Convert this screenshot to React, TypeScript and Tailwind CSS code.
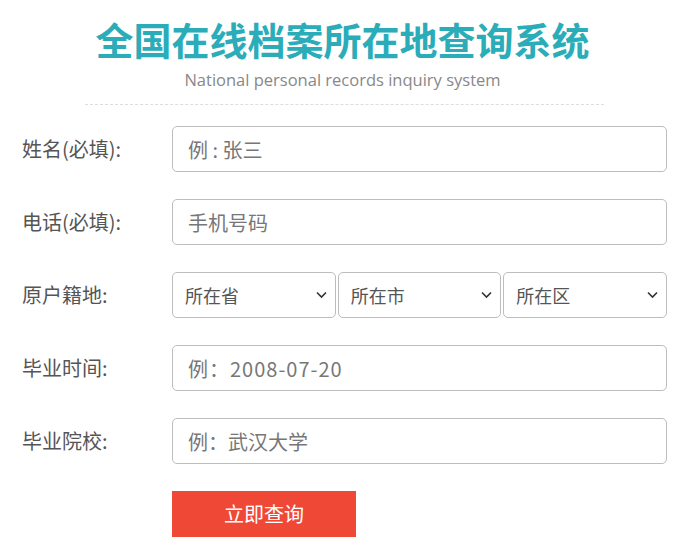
import { useState } from 'react';

const cjk = { fontFamily: '"Microsoft YaHei", "Noto Sans CJK SC", sans-serif' };

const Chevron = () => (
  <svg width="11" height="7" viewBox="0 0 11 7" className="pointer-events-none absolute right-[9px] top-1/2 -translate-y-1/2">
    <path d="M1 1l4.5 4.5L10 1" fill="none" stroke="#333" strokeWidth="1.6" />
  </svg>
);

const Row = ({ label, children }: { label: string; children: React.ReactNode }) => (
  <div className="flex items-center h-[46px]">
    <label className="w-[172px] pl-[22px] text-[20px] text-[#555]">{label}</label>
    <div className="flex-1 flex h-full">{children}</div>
  </div>
);

const TextInput = ({ placeholder, wide }: { placeholder: string; wide?: boolean }) => (
  <input
    placeholder={placeholder}
    className={
      wide
        ? 'w-full h-full border border-[#bdbdbd] rounded-[5px] px-[15px] text-[20px] tracking-[1px] text-[#555] placeholder:text-[#777] outline-none'
        : 'w-full h-full border border-[#bdbdbd] rounded-[5px] px-[15px] text-[20px] text-[#555] placeholder:text-[#777] outline-none'
    }
    style={cjk}
  />
);

const Select = ({ text }: { text: string }) => (
  <div className="relative flex-1 h-full">
    <select
      className="w-full h-full appearance-none border border-[#bdbdbd] rounded-[5px] pl-[12px] text-[18px] text-[#555] bg-white outline-none"
      style={cjk}
    >
      <option>{text}</option>
    </select>
    <Chevron />
  </div>
);

export default function App() {
  const [, setQ] = useState(0);
  return (
    <div className="w-[685px] h-[551px] bg-white overflow-hidden" style={cjk}>
      <div className="pt-[13px] text-center">
        <h1 className="text-[38px] font-bold leading-[52px] text-[#2badb9]">全国在线档案所在地查询系统</h1>
        <p
          className="mt-[3px] text-[16.5px] leading-[24px] text-[#888]"
          style={{ fontFamily: '"Open Sans", sans-serif' }}
        >
          National personal records inquiry system
        </p>
      </div>
      <div className="ml-[85px] w-[519px] mt-[12px] border-t border-dashed border-[#ddd]" />
      <form className="mt-[21px] pr-[18px] flex flex-col gap-[27px]" onSubmit={(e) => e.preventDefault()}>
        <Row label="姓名(必填):">
          <TextInput placeholder="例 : 张三" />
        </Row>
        <Row label="电话(必填):">
          <TextInput placeholder="手机号码" />
        </Row>
        <Row label="原户籍地:">
          <div className="flex w-full h-full gap-[2px]">
            <Select text="所在省" />
            <Select text="所在市" />
            <Select text="所在区" />
          </div>
        </Row>
        <Row label="毕业时间:">
          <TextInput placeholder="例：2008-07-20" wide />
        </Row>
        <Row label="毕业院校:">
          <TextInput placeholder="例：武汉大学" />
        </Row>
        <div className="pl-[172px]">
          <button
            type="submit"
            onClick={() => setQ((n) => n + 1)}
            className="w-[184px] h-[46px] bg-[#f04836] text-white text-[20px]"
          >
            立即查询
          </button>
        </div>
      </form>
    </div>
  );
}
